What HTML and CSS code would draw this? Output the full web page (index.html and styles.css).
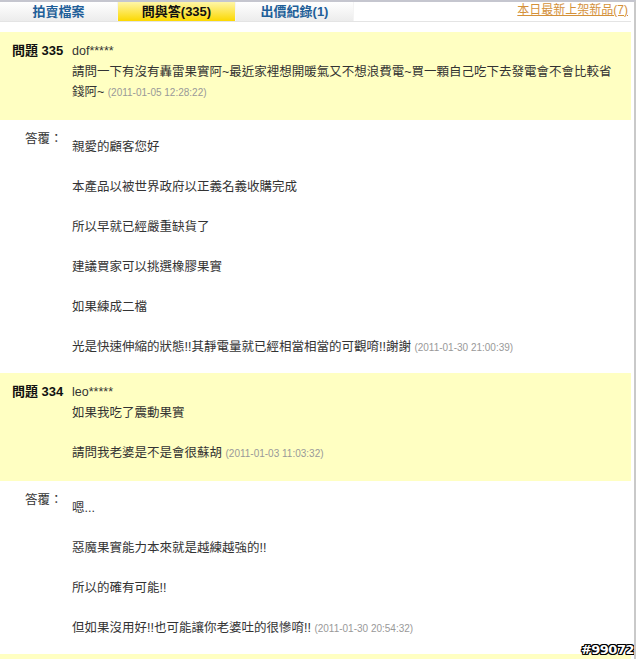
FILE: index.html
```html
<!DOCTYPE html>
<html lang="zh-Hant">
<head>
<meta charset="utf-8">
<title>問與答</title>
<link rel="stylesheet" href="styles.css">
</head>
<body>
<div class="page">
  <div class="topbar">
    <div class="tabs">
      <div class="tab">拍賣檔案</div>
      <div class="tab active">問與答(335)</div>
      <div class="tab">出價紀錄(1)</div>
    </div>
    <a class="newlink" href="#">本日最新上架新品(7)</a>
  </div>

  <div class="qa">
    <div class="question">
      <div class="qlabel">問題 335</div>
      <div class="qbody">
        <div class="user">dof*****</div>
        <div class="text">請問一下有沒有轟雷果實阿~最近家裡想開暖氣又不想浪費電~買一顆自己吃下去發電會不會比較省錢阿~ <span class="date">(2011-01-05 12:28:22)</span></div>
      </div>
    </div>
    <div class="answer">
      <div class="alabel">答覆：</div>
      <div class="abody">親愛的顧客您好<br><br>本產品以被世界政府以正義名義收購完成<br><br>所以早就已經嚴重缺貨了<br><br>建議買家可以挑選橡膠果實<br><br>如果練成二檔<br><br>光是快速伸縮的狀態!!其靜電量就已經相當相當的可觀唷!!謝謝 <span class="date">(2011-01-30 21:00:39)</span></div>
    </div>

    <div class="question">
      <div class="qlabel">問題 334</div>
      <div class="qbody">
        <div class="user">leo*****</div>
        <div class="text">如果我吃了震動果實<br><br>請問我老婆是不是會很蘇胡 <span class="date">(2011-01-03 11:03:32)</span></div>
      </div>
    </div>
    <div class="answer">
      <div class="alabel">答覆：</div>
      <div class="abody">嗯...<br><br>惡魔果實能力本來就是越練越強的!!<br><br>所以的確有可能!!<br><br>但如果沒用好!!也可能讓你老婆吐的很慘唷!! <span class="date">(2011-01-30 20:54:32)</span></div>
    </div>
    <div class="question next"></div>
  </div>
  <div class="mark">#99072</div>
</div>
</body>
</html>
```

FILE: styles.css
```css
html, body {
  margin: 0;
  padding: 0;
  background: #fff;
}
body {
  font-family: "Liberation Sans", Arial, "Noto Sans CJK TC", sans-serif;
  font-size: 12.5px;
  color: #333;
  overflow: hidden;
}
.page {
  position: relative;
  width: 634px;
  height: 659px;
  border-top: 2px solid #c5c6cf;
  border-right: 2px solid #c9c9c9;
  overflow: hidden;
}
.topbar {
  display: flex;
  justify-content: space-between;
  align-items: flex-start;
  width: 631px;
  border-bottom: 1px solid #e4e4e4;
  margin-bottom: 10px;
}
.tabs {
  display: flex;
  height: 19px;
}
.tab {
  width: 117px;
  height: 19px;
  line-height: 19px;
  text-align: center;
  font-weight: bold;
  font-size: 13px;
  color: #1f5f99;
  background: linear-gradient(#ffffff, #ececec);
  border-right: 1px solid #f4f4f4;
}
.tab.active {
  color: #111;
  background: linear-gradient(#fff6a8, #fcd800);
}
.newlink {
  font-size: 12px;
  line-height: 16px;
  color: #d4913a;
  text-decoration: underline;
  margin-right: 3px;
}
.qa {
  width: 631px;
}
.question {
  display: flex;
  background: #ffffc2;
  padding: 8px 0 17px 0;
}
.question.next {
  padding: 0;
  height: 8px;
}
.qlabel {
  width: 60px;
  padding-left: 12px;
  font-weight: bold;
  font-size: 13px;
  color: #111;
  line-height: 22px;
  flex: none;
}
.qbody {
  flex: 1;
  padding-right: 11px;
}
.user {
  line-height: 22px;
  color: #333;
}
.text, .abody {
  line-height: 20px;
  color: #333;
}
.answer {
  display: flex;
  padding: 9px 10px 15px 0;
}
.alabel {
  width: 47px;
  padding-left: 25px;
  line-height: 20px;
  flex: none;
}
.abody {
  margin-top: 8px;
}
.date {
  font-size: 10px;
  color: #999;
}
.mark {
  position: absolute;
  right: 0;
  bottom: 4px;
  font-family: "DejaVu Sans", sans-serif;
  font-weight: bold;
  font-size: 13px;
  color: #fff;
  letter-spacing: -0.5px;
  text-shadow: 1px 0 0 #000, -1px 0 0 #000, 0 1px 0 #000, 0 -1px 0 #000, 1px 1px 0 #000, -1px -1px 0 #000, 1px -1px 0 #000, -1px 1px 0 #000;
}
```
